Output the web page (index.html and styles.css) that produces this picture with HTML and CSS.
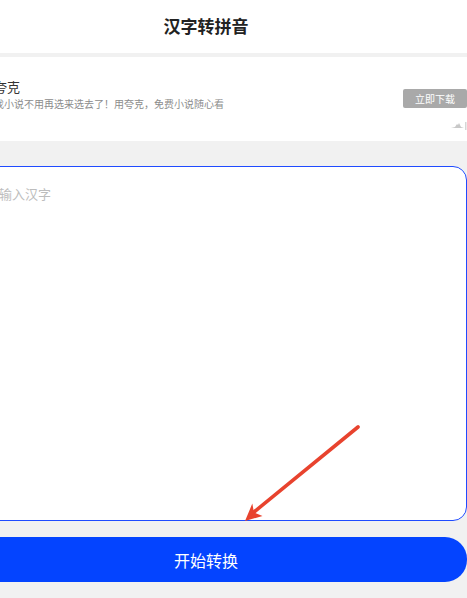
FILE: index.html
```html
<!DOCTYPE html>
<html lang="zh-CN">
<head>
  <meta charset="UTF-8" />
  <meta name="viewport" content="width=device-width, initial-scale=1" />
  <title>汉字转拼音</title>
  <link rel="stylesheet" href="styles.css">
</head>
<body>
  <div class="page">

    <!-- titre -->
    <div class="entete">汉字转拼音</div>

    <!-- pub -->
    <div class="pub">
      <div class="pub-info">
        <div class="pub-titre">夸克</div>
        <div class="pub-texte">找小说不用再选来选去了！用夸克，免费小说随心看</div>
      </div>
      <span class="pub-bouton">立即下载</span>
      <svg class="pub-logo" width="16" height="8" viewBox="0 0 16 8">
        <path d="M0 6 L4 5 L6 2 L7 3 L8 1 L10 5 L13 6 Z" fill="#c8c8c8" />
        <rect x="14" y="0" width="1.5" height="8" fill="#d6d6d6" />
      </svg>
    </div>

    <!-- saisie -->
    <div class="saisie">
      <textarea class="zone" placeholder="输入汉字"></textarea>
      <button class="bouton-bleu">开始转换</button>
    </div>
  </div>

  <!-- fleche -->
  <svg class="fleche" width="467" height="598" viewBox="0 0 467 598">
    <line x1="358" y1="427" x2="254" y2="512" stroke="#e8432e" stroke-width="3.6" stroke-linecap="round" />
    <polygon points="245,521 252.3,503.6 254,512.5 262.5,516" fill="#e8432e" />
  </svg>
</body>
</html>
```

FILE: styles.css
```css
body {
  margin: 0;
  background: #f1f1f1;
  font-family: "Noto Sans CJK SC", "Noto Sans", sans-serif;
  overflow: hidden;
}

.page {
  width: 522px;
  margin-left: -55px;
}

.entete {
  background: #fff;
  height: 53px;
  line-height: 51px;
  text-align: center;
  font-size: 17px;
  font-weight: bold;
  color: #222;
}

.pub {
  position: relative;
  display: flex;
  align-items: center;
  justify-content: space-between;
  background: #fff;
  height: 84px;
  margin-top: 4px;
  padding-left: 49px;
  box-sizing: border-box;
}

.pub-info {
  align-self: flex-start;
  padding-top: 21px;
}

.pub-titre {
  font-size: 13px;
  line-height: 18px;
  color: #333;
}

.pub-texte {
  font-size: 10px;
  line-height: 14px;
  margin-top: 1px;
  color: #8c8c8c;
}

.pub-bouton {
  background: #a9a9a9;
  color: #fff;
  font-size: 10px;
  line-height: 19px;
  width: 64px;
  text-align: center;
  border-radius: 2px;
  margin-bottom: 1px;
}

.pub-logo {
  position: absolute;
  right: 0;
  bottom: 11px;
}

.saisie {
  padding-top: 25px;
}

.zone {
  display: block;
  width: 100%;
  height: 355px;
  box-sizing: border-box;
  border: 1.5px solid #1f4bff;
  border-radius: 14px;
  background: #fff;
  padding: 17px 16px 18px 53px;
  font-family: inherit;
  font-size: 13px;
  line-height: 20px;
  color: #333;
  resize: none;
  outline: none;
}

.zone::placeholder {
  color: #bdbdbd;
}

.bouton-bleu {
  display: block;
  width: 100%;
  height: 45px;
  margin-top: 16px;
  border: none;
  border-radius: 22px;
  background: #0444ff;
  color: #fff;
  font-family: inherit;
  font-size: 16px;
  cursor: pointer;
}

.fleche {
  position: absolute;
  left: 0;
  top: 0;
  pointer-events: none;
}
```
